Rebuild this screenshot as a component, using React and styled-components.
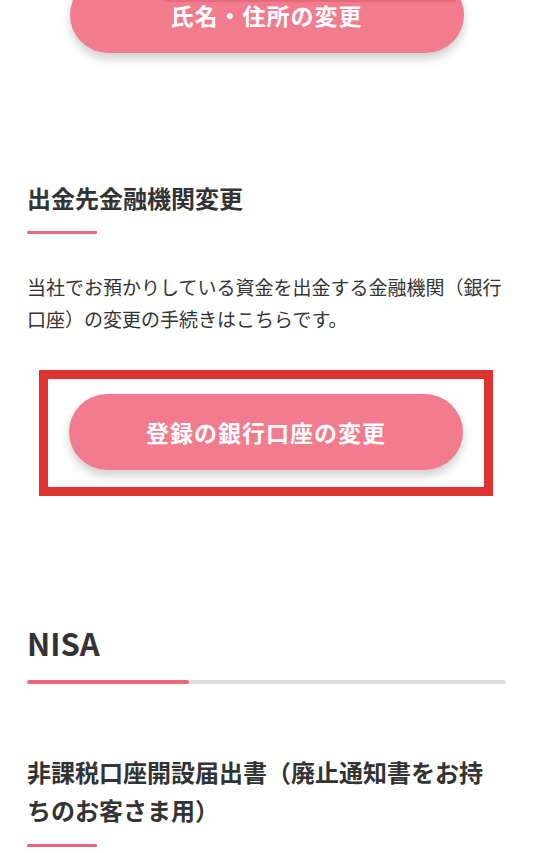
import React from 'react';
import styled, { createGlobalStyle } from 'styled-components';

const GlobalStyle = createGlobalStyle`
  html, body {
    margin: 0;
    padding: 0;
    background: #fff;
  }
  body {
    font-family: "Noto Sans CJK JP", "Noto Sans", sans-serif;
    color: #333;
  }
`;

const Page = styled.div`
  width: 533px;
  padding: 0 27px;
  box-sizing: border-box;
  overflow: hidden;
`;

const Section = styled.section`
  margin-top: ${(p) => p.$top || 0}px;
`;

const ButtonRow = styled.div`
  display: flex;
  justify-content: center;
`;

const PillButton = styled.a`
  position: relative;
  display: flex;
  align-items: center;
  justify-content: center;
  width: 394px;
  height: 76px;
  border-radius: 38px;
  background: #f27b8d;
  color: #fff;
  font-size: 23px;
  font-weight: 700;
  letter-spacing: 1px;
  text-decoration: none;
  box-shadow: 0 6px 10px rgba(0, 0, 0, 0.18);
  cursor: pointer;
`;

const TopEdge = styled.span`
  position: absolute;
  top: 23px;
  left: 94px;
  width: 292px;
  height: 2px;
  background: #e56a7d;
`;

const Heading = styled.h3`
  margin: 0;
  font-size: 24px;
  font-weight: 700;
  line-height: ${(p) => p.$lh || 36}px;
  color: #333;
`;

const ShortLine = styled.div`
  width: 70px;
  height: 3px;
  margin-top: 15px;
  background: #e8677a;
  border-radius: 1px;
`;

const Text = styled.p`
  margin: 37px 0 0;
  font-size: 19px;
  line-height: 32px;
  color: #333;
`;

const Highlight = styled.div`
  margin: 35px 13px 0 12px;
  border: 9px solid #de3430;
  padding: 15px 0 17px;
`;

const BigTitle = styled.h2`
  margin: 0;
  font-size: 31px;
  font-weight: 700;
  line-height: 40px;
  color: #333;
`;

const Track = styled.div`
  margin-top: 17px;
  height: 4px;
  border-radius: 2px;
  background: #dcdcdc;
  overflow: hidden;
`;

const TrackFill = styled.div`
  height: 100%;
  border-radius: 2px;
  background: #ec6579;
`;

export default function App() {
  return (
    <Page>
      <GlobalStyle />
      <Section $top={-23}>
        <ButtonRow>
          <PillButton>
            <TopEdge />
            氏名・住所の変更
          </PillButton>
        </ButtonRow>
      </Section>

      <Section $top={127}>
        <Heading>出金先金融機関変更</Heading>
        <ShortLine />
        <Text>
          当社でお預かりしている資金を出金する金融機関（銀行口座）の変更の手続きはこちらです。
        </Text>
        <Highlight>
          <ButtonRow>
            <PillButton>登録の銀行口座の変更</PillButton>
          </ButtonRow>
        </Highlight>
      </Section>

      <Section $top={127}>
        <BigTitle>NISA</BigTitle>
        <Track>
          <TrackFill style={{ width: '162px' }} />
        </Track>
      </Section>

      <Section $top={69}>
        <Heading $lh={38}>非課税口座開設届出書（廃止通知書をお持ちのお客さま用）</Heading>
        <ShortLine />
      </Section>
    </Page>
  );
}
